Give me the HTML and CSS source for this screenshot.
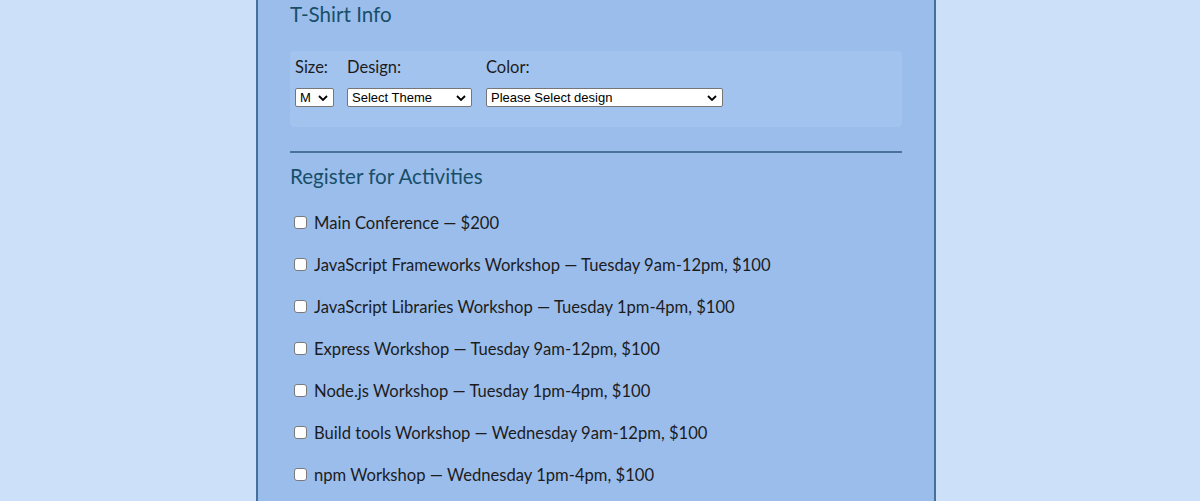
FILE: index.html
```html
<!DOCTYPE html>
<html>
<head>
<meta charset="utf-8">
<link rel="stylesheet" href="styles.css">
</head>
<body>
<div class="page">
  <form class="container">
    <section class="shirt">
      <h2 class="legend">T-Shirt Info</h2>
      <div class="shirt-box">
        <div class="col col-size">
          <label class="lbl">Size:</label>
          <select class="sel sel-size"><option>M</option></select>
        </div>
        <div class="col col-design">
          <label class="lbl">Design:</label>
          <select class="sel sel-design"><option>Select Theme</option></select>
        </div>
        <div class="col col-color">
          <label class="lbl">Color:</label>
          <select class="sel sel-color"><option>Please Select design</option></select>
        </div>
      </div>
    </section>
    <section class="activities">
      <h2 class="legend">Register for Activities</h2>
      <label class="act"><input type="checkbox" class="cb"><span>Main Conference — $200</span></label>
      <label class="act"><input type="checkbox" class="cb"><span>JavaScript Frameworks Workshop — Tuesday 9am-12pm, $100</span></label>
      <label class="act"><input type="checkbox" class="cb"><span>JavaScript Libraries Workshop — Tuesday 1pm-4pm, $100</span></label>
      <label class="act"><input type="checkbox" class="cb"><span>Express Workshop — Tuesday 9am-12pm, $100</span></label>
      <label class="act"><input type="checkbox" class="cb"><span>Node.js Workshop — Tuesday 1pm-4pm, $100</span></label>
      <label class="act"><input type="checkbox" class="cb"><span>Build tools Workshop — Wednesday 9am-12pm, $100</span></label>
      <label class="act"><input type="checkbox" class="cb"><span>npm Workshop — Wednesday 1pm-4pm, $100</span></label>
    </section>
  </form>
</div>
</body>
</html>
```

FILE: styles.css
```css
html, body {
  margin: 0;
  padding: 0;
  height: 100%;
  overflow: hidden;
}
body {
  background: #cce0fa;
  font-family: "Lato", "Open Sans", sans-serif;
  color: #1c1c1c;
}
.page {
  display: flex;
  justify-content: center;
  height: 100%;
}
.container {
  width: 612px;
  margin-left: -8px;
  padding: 0 32px;
  background: #9bbdec;
  border-left: 2px solid #44709a;
  border-right: 2px solid #44709a;
}
.legend {
  margin: 0;
  font-weight: 400;
  font-size: 20.6px;
  color: #184f68;
}
.shirt .legend {
  line-height: 28px;
}
.shirt-box {
  margin-top: 23px;
  height: 76px;
  box-sizing: border-box;
  padding: 5px 5px 0;
  background: #a3c3ef;
  border-radius: 4px;
  display: flex;
  gap: 13px;
}
.col {
  display: flex;
  flex-direction: column;
}
.lbl {
  font-size: 16.5px;
  line-height: 22px;
  margin-bottom: 10px;
}
.col-color { margin-left: 1px; }
.sel {
  appearance: none;
  -webkit-appearance: none;
  height: 19px;
  box-sizing: border-box;
  border: 1px solid #767676;
  border-radius: 2px;
  background-color: #fff;
  background-image: url("data:image/svg+xml;utf8,<svg xmlns='http://www.w3.org/2000/svg' width='10' height='6' viewBox='0 0 10 6'><path d='M1 1l4 4 4-4' fill='none' stroke='black' stroke-width='1.8'/></svg>");
  background-repeat: no-repeat;
  background-position: right 5px center;
  font-family: "Liberation Sans", Arial, sans-serif;
  font-size: 13px;
  color: #000;
  padding: 0 0 0 4px;
  margin: 0;
}
.sel-size { width: 39px; }
.sel-design { width: 125px; }
.sel-color { width: 237px; }
.activities {
  margin-top: 24px;
  border-top: 2px solid #4a7399;
  padding-top: 9px;
}
.activities .legend {
  line-height: 28px;
  margin-bottom: 22px;
}
.act {
  display: flex;
  align-items: center;
  font-size: 16.6px;
  line-height: 22px;
  height: 22px;
  margin-bottom: 20px;
  padding-left: 4px;
}
.cb {
  appearance: none;
  -webkit-appearance: none;
  width: 13px;
  height: 13px;
  margin: 0 7px 0 0;
  box-sizing: border-box;
  border: 1px solid #7a7a7a;
  border-radius: 3px;
  background: #fff;
  position: relative;
  top: -1px;
}
```
